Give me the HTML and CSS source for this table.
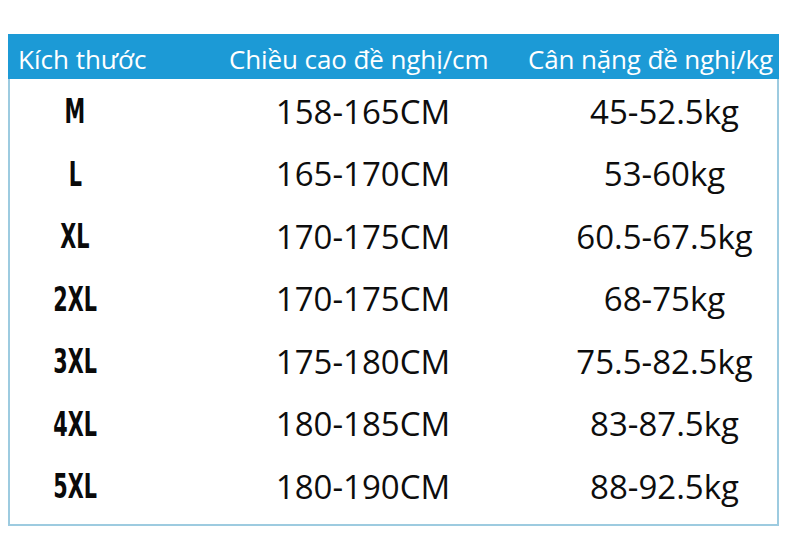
FILE: index.html
```html
<!DOCTYPE html>
<html lang="vi">
<head>
<meta charset="utf-8">
<link rel="stylesheet" href="styles.css">
</head>
<body>
<div class="chart">
  <div class="row head">
    <div class="c1">Kích thước</div>
    <div class="c2">Chiều cao đề nghị/cm</div>
    <div class="c3">Cân nặng đề nghị/kg</div>
  </div>
  <div class="body">
    <div class="row"><div class="c1"><span class="size">M</span></div><div class="c2">158-165CM</div><div class="c3">45-52.5kg</div></div>
    <div class="row"><div class="c1"><span class="size">L</span></div><div class="c2">165-170CM</div><div class="c3">53-60kg</div></div>
    <div class="row"><div class="c1"><span class="size">XL</span></div><div class="c2">170-175CM</div><div class="c3">60.5-67.5kg</div></div>
    <div class="row"><div class="c1"><span class="size">2XL</span></div><div class="c2">170-175CM</div><div class="c3">68-75kg</div></div>
    <div class="row"><div class="c1"><span class="size">3XL</span></div><div class="c2">175-180CM</div><div class="c3">75.5-82.5kg</div></div>
    <div class="row"><div class="c1"><span class="size">4XL</span></div><div class="c2">180-185CM</div><div class="c3">83-87.5kg</div></div>
    <div class="row"><div class="c1"><span class="size">5XL</span></div><div class="c2">180-190CM</div><div class="c3">88-92.5kg</div></div>
  </div>
</div>
</body>
</html>
```
FILE: styles.css
```css
html, body {
  margin: 0;
  padding: 0;
  background: #ffffff;
}
body {
  padding: 34px 11px 0 8px;
  font-family: "Open Sans", "Noto Sans", sans-serif;
  color: #111111;
}
.chart {
  width: 771px;
  box-sizing: border-box;
}
.row {
  display: grid;
  grid-template-columns: 140px 380px 251px;
  align-items: center;
}
.head {
  height: 45px;
  background: #1c9ad6;
  color: #ffffff;
  font-size: 26px;
  line-height: 45px;
  padding-top: 3px;
  box-sizing: border-box;
}
.head .c1 { padding-left: 10px; text-align: left; white-space: nowrap; }
.head .c2 { padding-left: 81px; text-align: left; white-space: nowrap; letter-spacing: -0.1px; }
.head .c3 { padding-left: 0; text-align: left; white-space: nowrap; letter-spacing: -0.15px; }
.body {
  border: 2px solid #9dcbe0;
  border-top: none;
  padding: 1px 0 6px;
}
.body .row {
  height: 62.5px;
  font-size: 33px;
  line-height: 62px;
  color: #0d0d0d;
}
.body .c1 { text-align: center; padding-right: 10px; }
.body .c2 { text-align: center; padding-left: 46px; }
.body .c3 { text-align: center; padding-left: 18px; }
.size {
  display: inline-block;
  font-family: "Liberation Sans Narrow", "DejaVu Sans Condensed", "Liberation Sans", sans-serif;
  font-weight: bold;
  font-size: 33px;
  transform: scale(0.7, 1.03);
  color: #0a0a0a;
}
```
